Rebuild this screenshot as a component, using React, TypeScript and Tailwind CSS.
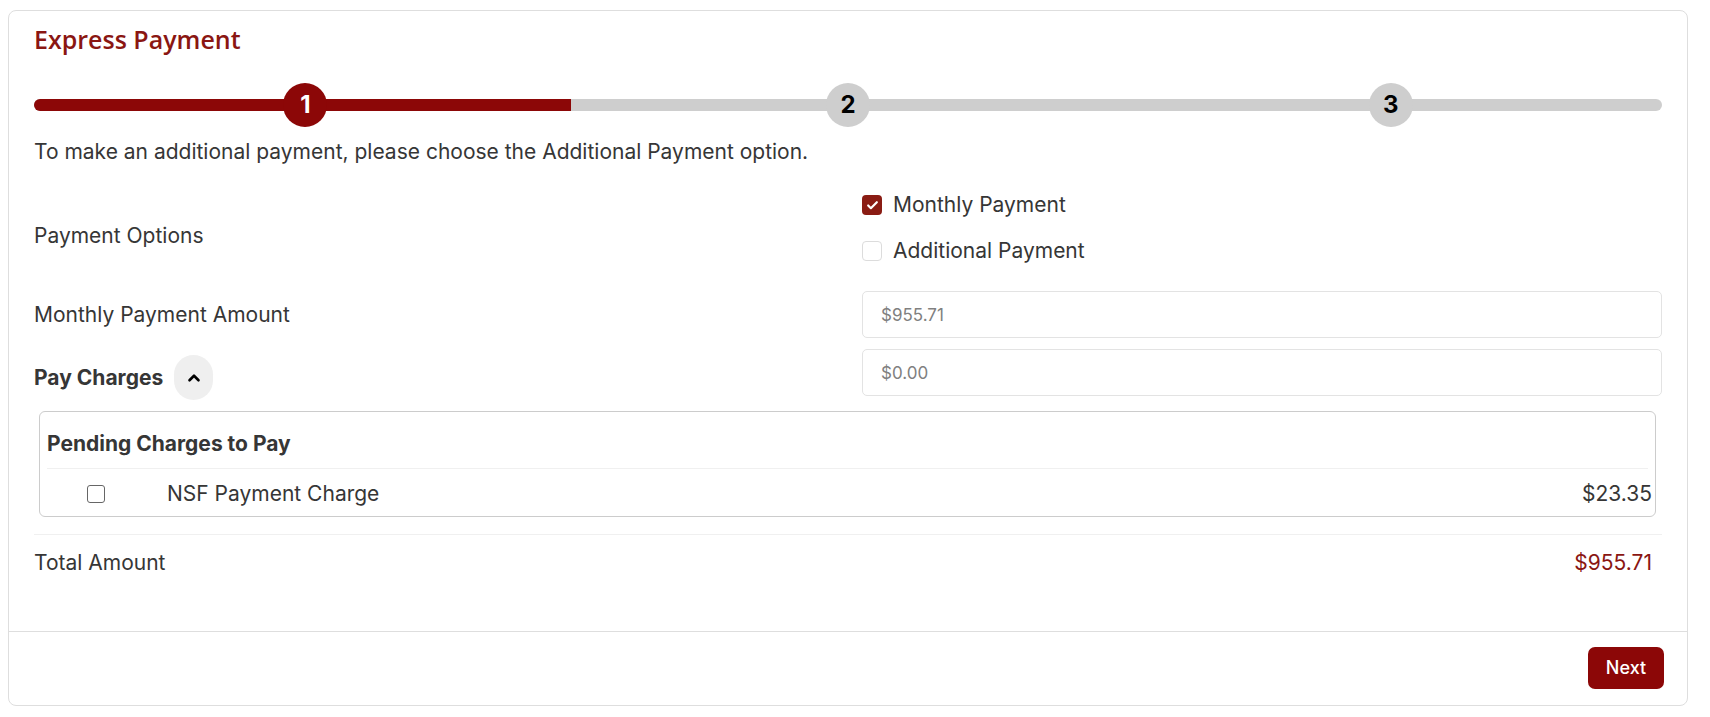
import { Check, ChevronUp } from 'lucide-react'

const steps = [1, 2, 3]

function ProgressSteps({ current }: { current: number }) {
  return (
    <div className="relative h-[44px] flex items-center">
      <div className="h-[12px] w-full rounded-full bg-[#cecece] overflow-hidden">
        <div className="h-full w-[33%] bg-[#8c0707]" />
      </div>
      {/* step markers sit over the bar at 1/6, 3/6, 5/6 */}
      <div className="absolute inset-0 grid grid-cols-3">
        {steps.map((s) => (
          <div key={s} className="flex items-center justify-center">
            <div
              className={
                s <= current
                  ? 'flex h-[44px] w-[44px] items-center justify-center rounded-full bg-[#8c0707] text-white text-[24px] font-bold'
                  : 'flex h-[44px] w-[44px] items-center justify-center rounded-full bg-[#cecece] text-black text-[24px] font-bold'
              }
            >
              {s}
            </div>
          </div>
        ))}
      </div>
    </div>
  )
}

function Option({ label, checked }: { label: string; checked?: boolean }) {
  return (
    <label className="flex h-[40px] items-center gap-[11px]">
      {checked ? (
        <span className="flex h-[20px] w-[20px] items-center justify-center rounded-[4px] bg-[#8a1c14]">
          <Check className="h-[13px] w-[13px] text-white" strokeWidth={4} />
        </span>
      ) : (
        <span className="h-[20px] w-[20px] rounded-[4px] border border-[#dcdcdc] bg-white" />
      )}
      <span>{label}</span>
    </label>
  )
}

function AmountInput({ value }: { value: string }) {
  return (
    <div className="flex h-[47px] items-center rounded-[5px] border border-[#e3e3e3] px-[18px] text-[17px] text-[#808080]">
      {value}
    </div>
  )
}

export default function App() {
  return (
    <div
      className="min-h-screen bg-white pt-[10px] px-[8px] text-[#363636] text-[21px] leading-[30px]"
      style={{ fontFamily: 'Inter, "Noto Sans", sans-serif' }}
    >
      <div className="w-[1680px] rounded-[8px] border border-[#dedede] bg-white">
        <div className="px-[25px] pt-[13px]">
          <h2
            className="text-[25px] font-semibold leading-[30px] text-[#8a1612]"
            style={{ fontFamily: '"Open Sans", sans-serif' }}
          >
            Express Payment
          </h2>

          <div className="mt-[29px]">
            <ProgressSteps current={1} />
          </div>

          <p className="mt-[10px] leading-[30px]">
            To make an additional payment, please choose the Additional Payment option.
          </p>

          <div className="mt-[18px] grid grid-cols-2 gap-x-[28px]">
            {/* Payment options */}
            <div className="pt-[36px] leading-[30px]">Payment Options</div>
            <div className="flex flex-col gap-[6px]">
              <Option label="Monthly Payment" checked />
              <Option label="Additional Payment" />
            </div>

            <div className="mt-[20px] flex h-[47px] items-center">Monthly Payment Amount</div>
            <div className="mt-[20px]">
              <AmountInput value="$955.71" />
            </div>

            <div className="mt-[17px] flex h-[45px] items-center gap-[11px]">
              <span className="font-bold">Pay Charges</span>
              <button className="flex h-[45px] w-[39px] items-center justify-center rounded-full bg-[#efefef]">
                <ChevronUp className="h-[18px] w-[18px] text-black" strokeWidth={3.5} />
              </button>
            </div>
            <div className="mt-[11px]">
              <AmountInput value="$0.00" />
            </div>
          </div>

          {/* Pending charges table */}
          <div className="mt-[11px] ml-[5px] mr-[6px] rounded-[6px] border border-[#cccccc]">
            <div className="flex h-[56px] items-end pb-[9px] pl-[7px] font-bold">Pending Charges to Pay</div>
            <div className="mx-[7px] border-t border-[#f0f0f0]" />
            <div className="flex h-[47px] items-center pr-[3px] pt-[2px]">
              <div className="flex w-[108px] justify-center pl-[3px]">
                <span className="h-[18px] w-[18px] rounded-[3px] border-[1.5px] border-[#666]" />
              </div>
              <div className="flex-1 pl-[19px]">NSF Payment Charge</div>
              <div>$23.35</div>
            </div>
          </div>

          <div className="mt-[17px] border-t border-[#f0f0f0]" />
          <div className="flex h-[55px] items-center justify-between pr-[10px]">
            <span>Total Amount</span>
            <span className="text-[#8a1612]">$955.71</span>
          </div>
          <div className="h-[41px]" />
        </div>

        <div className="flex justify-end border-t border-[#dedede] px-[23px] pt-[15px] pb-[16px]">
          <button className="h-[42px] w-[76px] rounded-[7px] bg-[#8c0707] text-[18px] font-medium text-white">
            Next
          </button>
        </div>
      </div>
    </div>
  )
}
